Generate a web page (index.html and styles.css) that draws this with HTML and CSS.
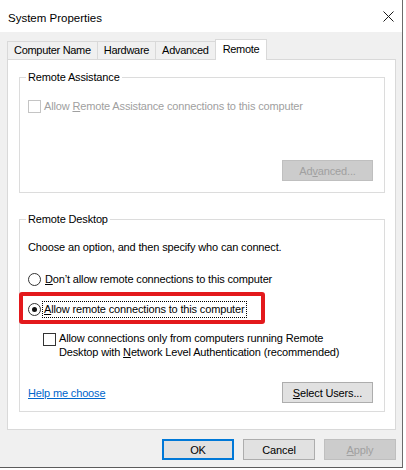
FILE: index.html
```html
<!DOCTYPE html>
<html lang="en">
<head>
  <meta charset="UTF-8" />
  <title>System Properties</title>
  <link rel="stylesheet" href="styles.css">
</head>
<body>
  <div class="window">
    <div class="titlebar">
      <span class="title">System Properties</span>
      <svg class="close" width="11" height="11" viewBox="0 0 11 11">
        <path d="M0.5 0.5 L10.5 10.5 M10.5 0.5 L0.5 10.5" stroke="#1a1a1a" stroke-width="1" fill="none" />
      </svg>
    </div>

    <div class="content">
      <div class="tabs">
        <div class="tab">Computer Name</div>
        <div class="tab">Hardware</div>
        <div class="tab">Advanced</div>
        <div class="tab active">Remote</div>
      </div>

      <div class="panel">
        <fieldset class="group">
          <legend>Remote Assistance</legend>
          <label class="check disabled"><span class="box"></span><span>Allow <u>R</u>emote Assistance connections to this computer</span></label>
          <div class="group-actions">
            <button class="btn" disabled>Ad<u>v</u>anced...</button>
          </div>
        </fieldset>

        <fieldset class="group desktop">
          <legend>Remote Desktop</legend>
          <p class="hint">Choose an option, and then specify who can connect.</p>
          <label class="radio first"><span class="dot"></span><span><u>D</u>on’t allow remote connections to this computer</span></label>
          <label class="radio checked marked">
            <span class="dot"></span><span class="focus"><u>A</u>llow remote connections to this computer</span>
            <span class="annotation"></span>
          </label>
          <label class="check nla">
            <span class="box"></span>
            <span>Allow connections only from computers running Remote<br>Desktop with <u>N</u>etwork Level Authentication (recommended)</span>
          </label>
          <div class="group-footer">
            <a href="#" class="link">Help me choose</a>
            <button class="btn"><u>S</u>elect Users...</button>
          </div>
        </fieldset>
      </div>

      <div class="actions">
        <button class="btn default">OK</button>
        <button class="btn">Cancel</button>
        <button class="btn" disabled><u>A</u>pply</button>
      </div>
    </div>
  </div>
</body>
</html>
```

FILE: styles.css
```css
html, body {
  margin: 0;
  padding: 0;
}

body {
  font-family: 'Liberation Sans', Arial, sans-serif;
  font-size: 11px;
  letter-spacing: -0.15px;
  color: #000;
  background: #fff;
}

.window {
  width: 402px;
  background: #f0f0f0;
  border-right: 1px solid #6b6b6b;
  border-bottom: 1px solid #5c5c5c;
}

.titlebar {
  height: 32px;
  box-sizing: border-box;
  padding: 1px 8px 0 8px;
  background: #fff;
  display: flex;
  align-items: center;
  justify-content: space-between;
}

.title {
  font-size: 11.5px;
  letter-spacing: 0;
  padding-top: 2px;
}

.content {
  padding: 7px 6px 7px 7px;
}

/* tabs */
.tabs {
  display: flex;
  align-items: flex-end;
}

.tab {
  height: 17px;
  line-height: 17px;
  padding: 0 6px;
  border: 1px solid #d9d9d9;
  border-bottom: 0;
  margin-right: -1px;
  white-space: nowrap;
  letter-spacing: -0.3px;
}

.tab.active {
  height: 18px;
  line-height: 18px;
  padding: 0 7px 2px;
  margin-bottom: -1px;
  background: #fff;
  position: relative;
  z-index: 1;
}

.panel {
  background: #fff;
  border: 1px solid #d9d9d9;
  padding: 10px 10px 17px 11px;
}

/* group boxes */
.group {
  margin: 0;
  min-width: 0;
  padding: 14px 11px 11px 8px;
  border: 1px solid #dcdcdc;
}

.group legend {
  padding: 0 2px;
  margin-left: -2px;
  line-height: 15px;
}

.desktop {
  margin-top: 19px;
  padding: 13px 11px 8px 8px;
}

.hint {
  margin: 0;
  line-height: 15px;
}

.check,
.radio {
  display: flex;
  align-items: center;
  height: 15px;
  line-height: 15px;
  white-space: nowrap;
}

.box {
  flex: none;
  width: 11px;
  height: 11px;
  margin-right: 3px;
  border: 1px solid #333;
  background: #fff;
}

.disabled {
  color: #a0a0a0;
}

.disabled .box {
  border-color: #c4c4c4;
}

.dot {
  flex: none;
  width: 11px;
  height: 11px;
  margin-right: 4px;
  border: 1px solid #333;
  border-radius: 50%;
  background: #fff;
  position: relative;
}

.checked .dot::after {
  content: "";
  position: absolute;
  inset: 3px;
  border-radius: 50%;
  background: #111;
}

.radio.first {
  margin-top: 17px;
}

.radio.marked {
  margin-top: 15px;
  position: relative;
}

.focus {
  margin-left: -2px;
  padding: 0 1px;
  outline: 1px dotted #000;
}

/* red highlight drawn over the screenshot */
.annotation {
  position: absolute;
  left: -9px;
  top: -10px;
  width: 246px;
  height: 32px;
  box-sizing: border-box;
  border: 4px solid #e3191c;
  border-radius: 3px;
  pointer-events: none;
}

.nla {
  height: auto;
  align-items: flex-start;
  line-height: 14px;
  margin-top: 14px;
  padding-left: 15px;
}

.nla .box {
  margin-top: 2px;
}

.group-actions {
  display: flex;
  justify-content: flex-end;
  margin-top: 46px;
}

.group-footer {
  display: flex;
  justify-content: space-between;
  align-items: center;
  margin-top: 23px;
}

.link {
  color: #0066cc;
  text-decoration: underline;
}

/* buttons */
.btn {
  width: 91px;
  height: 21px;
  padding: 0;
  font: inherit;
  letter-spacing: inherit;
  color: #000;
  background: #e1e1e1;
  border: 1px solid #adadad;
}

.btn:disabled {
  color: #a0a0a0;
  background: #cccccc;
  border-color: #bfbfbf;
}

.btn.default {
  border-color: #0078d7;
  box-shadow: inset 0 0 0 1px #0078d7;
}

.actions {
  display: flex;
  justify-content: flex-end;
  gap: 9px;
  margin-top: 9px;
}

.actions .btn {
  width: 72px;
}
```
